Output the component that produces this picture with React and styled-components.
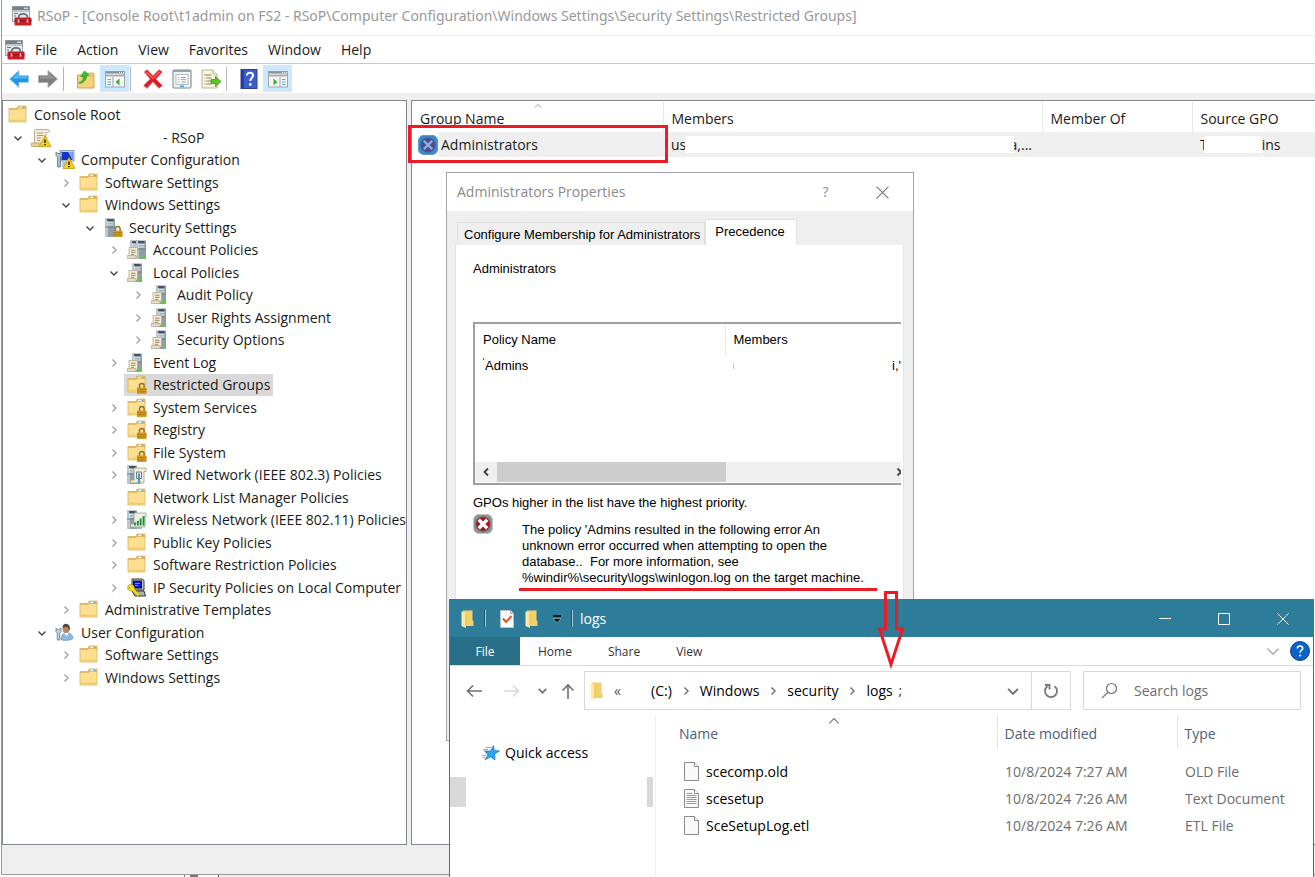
import React, { useState } from 'react';
import styled, { createGlobalStyle } from 'styled-components';

const GlobalStyle = createGlobalStyle`
  * {
    box-sizing: border-box;
  }

  body {
    margin: 0;
    background: #fff;
    color: #1a1a1a;
    font-family: 'Open Sans', 'Noto Sans', sans-serif;
    font-size: 14px;
    line-height: 20px;
  }

  button, input {
    font: inherit;
    color: inherit;
    border: 0;
    padding: 0;
    margin: 0;
    background: none;
  }

  svg {
    display: block;
    flex: none;
  }
`;

/* ---------- desktop and console window ---------- */

const Desktop = styled.div`
  position: relative;
  display: flex;
  flex-direction: column;
  min-height: 100vh;
  padding-left: 1px;
  background: #fff;
  overflow: hidden;
`;

const Console = styled.main`
  flex: 1;
  display: flex;
  flex-direction: column;
  border-left: 1px solid #9a9a9a;
  border-bottom: 1px solid #9a9a9a;
  background: #efefef;
`;

const TitleBar = styled.header`
  display: flex;
  align-items: center;
  gap: 5px;
  height: 36px;
  padding: 0 10px 4px;
  background: #fff;
  border-bottom: 1px solid #ececec;
`;

const WindowTitle = styled.h1`
  margin: 0;
  font-family: 'Noto Sans', 'Open Sans', sans-serif;
  font-size: 14px;
  font-weight: 400;
  color: #999;
  white-space: nowrap;
`;

const MenuBar = styled.nav`
  display: flex;
  align-items: center;
  height: 28px;
  padding-left: 3px;
  background: #fff;
  border-bottom: 1px solid #c8c8c8;
`;

const MenuItem = styled.button`
  padding: 0 10px;
`;

const ToolBar = styled.div`
  display: flex;
  align-items: center;
  height: 29px;
  padding-left: 2px;
  background: #fff;
`;

const ToolButton = styled.button`
  display: flex;
  align-items: center;
  justify-content: center;
  width: 29px;
  height: 27px;
  background: ${({ $on }) => ($on ? '#cce8ff' : 'none')};
`;

const ToolDivider = styled.span`
  width: 1px;
  height: 24px;
  margin: 0 7px 0 1px;
  background: #b5b5b5;
`;

const Panes = styled.div`
  flex: 1;
  display: flex;
  gap: 4px;
  padding-top: 7px;
`;

const Pane = styled.section`
  border: 1px solid #828790;
  background: #fff;
  ${({ $grow }) => ($grow ? 'flex: 1; border-right: 0; min-width: 0;' : 'width: 405px; padding: 3px 0 0 1px;')}
`;

const StatusBar = styled.footer`
  height: 29px;
`;

const Taskbar = styled.div`
  display: flex;
  height: 2px;
  padding-left: 183px;
`;

const TaskMark = styled.span`
  width: ${({ $wide }) => ($wide ? '8px' : '1px')};
  margin-right: ${({ $wide }) => ($wide ? '20px' : '5px')};
  background: #777;
`;

const TaskRest = styled.span`
  flex: 1;
  border-left: 1px solid #555;
  background: #efefef;
`;

/* ---------- tree ---------- */

const Tree = styled.ul`
  display: grid;
  grid-auto-rows: 1fr;
  height: 585px;
  margin: 0;
  padding: 0;
  list-style: none;
`;

const TreeRow = styled.li`
  display: flex;
  align-items: center;
  min-height: 0;
  padding-left: ${({ $depth }) => ($depth ? ($depth - 1) * 24 + 3 : 1)}px;
`;

const Toggle = styled.button`
  display: flex;
  align-items: center;
  justify-content: center;
  width: 21px;
  height: 20px;
`;

const NoToggle = styled.span`
  width: ${({ $root }) => ($root ? '0' : '21px')};
`;

const NodeButton = styled.button`
  display: flex;
  align-items: center;
  gap: 6px;
  height: 22px;
  padding: 0 3px;
  white-space: pre;
  background: ${({ $selected }) => ($selected ? '#d9d9d9' : 'none')};
`;

const HiddenName = styled.span`
  display: inline-block;
  width: 106px;
`;

/* ---------- group list ---------- */

const GroupTable = styled.table`
  width: 100%;
  table-layout: fixed;
  border-collapse: collapse;
  white-space: nowrap;
`;

const GroupHead = styled.th`
  position: relative;
  width: ${({ $width }) => $width || 'auto'};
  height: 31px;
  padding: 4px 0 0 8px;
  border-right: 1px solid #e8e8e8;
  font-weight: 400;
  text-align: left;

  &:last-child {
    border-right: 0;
  }

  svg {
    position: absolute;
    top: 1px;
    left: 122px;
  }
`;

const GroupCell = styled.td`
  height: 25px;
  padding: 0 10px 0 8px;
  background: #efefef;

  &:first-child {
    padding-left: 6px;
    background: linear-gradient(to right, #fff 26px, #efefef 26px);
  }
`;

const CellLine = styled.div`
  display: flex;
  align-items: center;
  gap: ${({ $gap }) => ($gap ? '3px' : '0')};
`;

const Blank = styled.span`
  position: relative;
  flex: ${({ $width }) => ($width ? 'none' : '1')};
  width: ${({ $width }) => $width || 'auto'};
  height: 17px;
  margin: 0 ${({ $right }) => $right || 0} 0 ${({ $left }) => $left || 0};
  background: #fff;
`;

/* ---------- properties dialog ---------- */

const Dialog = styled.section`
  position: absolute;
  top: 172px;
  left: 446px;
  width: 468px;
  height: 569px;
  display: flex;
  flex-direction: column;
  border: 1px solid #a3a3a3;
  background: #efefef;
  color: #000;
  font: 13px/16px 'Liberation Sans', Arial, sans-serif;
`;

const DialogTitle = styled.header`
  display: flex;
  align-items: center;
  height: 38px;
  padding: 0 2px 0 10px;
  background: #fff;
  color: #8a8a8a;
  font: 14px/20px 'Open Sans', 'Noto Sans', sans-serif;
`;

const DialogName = styled.h2`
  flex: 1;
  margin: 0;
  font-size: 14px;
  font-weight: 400;
`;

const DialogButton = styled.button`
  display: flex;
  align-items: center;
  justify-content: center;
  width: 57px;
  height: 36px;
`;

const Tabs = styled.div`
  display: flex;
  align-items: flex-end;
  height: 34px;
  padding: 8px 0 0 10px;
`;

const Tab = styled.button`
  height: ${({ $active }) => ($active ? '26px' : '23px')};
  padding: ${({ $active }) => ($active ? '0 11px 2px 9px' : '2px 4px 0 6px')};
  border: 1px solid #e0e0e0;
  border-bottom: 0;
  background: ${({ $active }) => ($active ? '#fff' : '#efefef')};
  white-space: nowrap;
`;

const TabPage = styled.div`
  flex: 1;
  margin: 0 9px 8px 8px;
  padding: 16px 2px 0 17px;
  background: #fff;
  border: 1px solid #e4e4e4;
  border-top: 0;
`;

const Text = styled.p`
  margin: 0;
`;

const PolicyBox = styled.div`
  display: flex;
  flex-direction: column;
  height: 163px;
  margin: 45px 0 10px;
  padding-bottom: 1px;
  border: 2px solid #9b9fa8;
  border-right: 0;
  overflow: hidden;
`;

const PolicyTable = styled.table`
  width: 100%;
  table-layout: fixed;
  border-collapse: collapse;

  th, td {
    height: 31px;
    padding: 0 8px;
    font-weight: 400;
    text-align: left;
    white-space: nowrap;
  }

  td {
    height: 22px;
    padding-right: 0;
  }

  th:first-child {
    width: 250px;
    border-right: 1px solid #e8e8e8;
  }
`;

const Remnant = styled.span`
  width: 1px;
  height: ${({ $tall }) => ($tall ? '6px' : '2px')};
  margin-right: 1px;
  align-self: ${({ $tall }) => ($tall ? 'center' : 'flex-start')};
  background: ${({ $tall }) => ($tall ? '#d9c3a0' : '#555')};
`;

const ScrollTrack = styled.div`
  display: grid;
  grid-template-columns: 22px 229px 1fr;
  align-items: center;
  justify-items: center;
  height: 20px;
  margin-top: auto;
  background: #efefef;
`;

const ScrollThumb = styled.div`
  width: 100%;
  height: 20px;
  background: #cdcdcd;
`;

const ScrollArrow = styled.button`
  display: flex;
  justify-self: ${({ $end }) => ($end ? 'end' : 'center')};
  width: ${({ $end }) => ($end ? '7px' : '10px')};
  overflow: hidden;
`;

const ErrorRow = styled.div`
  display: flex;
  gap: 29px;
  margin-top: 3px;
`;

const ErrorText = styled.p`
  margin: 0;
  padding-top: 8px;
  white-space: pre;
`;

const Underlined = styled.span`
  position: relative;

  &::after {
    content: '';
    position: absolute;
    right: -13px;
    bottom: -6px;
    left: -3px;
    height: 3px;
    background: #ed1c24;
  }
`;

/* ---------- explorer window ---------- */

const Explorer = styled.section`
  position: absolute;
  top: 599px;
  right: 1px;
  bottom: 0;
  left: 449px;
  display: flex;
  flex-direction: column;
  border: 1px solid #2d7d9a;
  border-bottom: 0;
  background: #fff;
  color: #000;
`;

const ExplorerTitle = styled.header`
  display: flex;
  align-items: center;
  height: 37px;
  padding: 0 1px 0 11px;
  background: #2d7d9a;
  color: #fff;
`;

const QuickBar = styled.div`
  display: flex;
  align-items: center;
  flex: 1;
`;

const QuickButton = styled.button`
  display: flex;
  align-items: center;
  justify-content: center;
  width: 25px;
`;

const QuickDivider = styled.span`
  width: 2px;
  height: 17px;
  margin: ${({ $last }) => ($last ? '0 7px 0 2px' : '0 8px 0 10px')};
  border-left: 1px solid #1f566b;
  background: #a5c9d6;
`;

const FolderName = styled.h2`
  margin: 0;
  font-size: 14px;
  font-weight: 400;
`;

const CaptionButton = styled.button`
  display: flex;
  align-items: center;
  justify-content: center;
  width: 59px;
  height: 36px;
`;

const Ribbon = styled.nav`
  display: flex;
  align-items: center;
  height: 29px;
  padding-right: 3px;
  border-bottom: 1px solid #dadada;
  font-size: 12px;
  color: #333;
`;

const RibbonTab = styled.button`
  height: 28px;
  padding: 1px 18px 0;
`;

const FileTab = styled(RibbonTab)`
  width: 70px;
  padding: 1px 0 0;
  color: #fff;
  background: #296f87;
`;

const RibbonSpace = styled.span`
  flex: 1;
`;

const RibbonButton = styled.button`
  margin-left: 9px;
`;

const NavRow = styled.div`
  display: flex;
  align-items: center;
  height: 49px;
  padding: 0 12px 0 5px;
`;

const NavButton = styled.button`
  display: flex;
  justify-content: center;
  width: ${({ $width }) => $width}px;
`;

const Address = styled.div`
  flex: 1;
  display: flex;
  align-items: center;
  height: 39px;
  margin: 0 12px 0 1px;
  padding-left: 5px;
  border: 1px solid #d9d9d9;
`;

const Chevrons = styled.span`
  width: 48px;
  padding-left: 11px;
  color: #555;
`;

const Crumb = styled.a`
  color: #000;
  text-decoration: none;
`;

const CrumbArrow = styled.span`
  display: flex;
  justify-content: center;
  width: 28px;
`;

const CrumbTail = styled.span`
  flex: 1;
  padding-left: 6px;
  font-size: 12px;
`;

const RefreshButton = styled.button`
  display: flex;
  align-items: center;
  justify-content: center;
  width: 39px;
  height: 37px;
  margin-left: 12px;
  border-left: 1px solid #d9d9d9;
`;

const SearchBox = styled.label`
  display: flex;
  align-items: center;
  gap: 16px;
  width: 218px;
  height: 39px;
  padding-left: 17px;
  border: 1px solid #d9d9d9;
`;

const SearchInput = styled.input`
  flex: 1;
  min-width: 0;
  outline: 0;

  &::placeholder {
    color: #6d6d6d;
    opacity: 1;
  }
`;

const ExplorerBody = styled.div`
  flex: 1;
  display: flex;
`;

const Places = styled.aside`
  width: 206px;
  border-right: 1px solid #efefef;
`;

const QuickAccess = styled.a`
  display: flex;
  align-items: center;
  gap: 5px;
  margin-top: 28px;
  padding-left: 31px;
  color: #000;
  text-decoration: none;
`;

const PlaceRow = styled.div`
  height: 30px;
  margin: 14px 2px 0 0;
  padding: 0 6px 0 16px;
  background: #d9d9d9;
`;

const PlaceBlank = styled.div`
  height: 30px;
  background: #fff;
`;

const FileTable = styled.table`
  flex: 1;
  align-self: flex-start;
  table-layout: fixed;
  border-collapse: collapse;
  white-space: nowrap;
`;

const FileHead = styled.th`
  position: relative;
  width: ${({ $width }) => $width || 'auto'};
  height: 34px;
  padding: 3px 0 0 ${({ $first }) => ($first ? '23px' : '7px')};
  border-right: 1px solid #e2e2e2;
  color: #4c607a;
  font-weight: 400;
  text-align: left;

  &:last-child {
    border-right: 0;
  }

  svg {
    position: absolute;
    top: 0;
    left: 172px;
  }
`;

const FileCell = styled.td`
  height: 27px;
  padding: 0 0 0 8px;
  color: #6d6d6d;
`;

const FileName = styled.div`
  display: flex;
  align-items: center;
  gap: 7px;
  padding-left: 20px;
  color: #000;
`;

const FileBody = styled.tbody`
  &::before {
    content: '';
    display: table-row;
    height: 9px;
  }
`;

/* ---------- marks over the windows ---------- */

const RedFrame = styled.div`
  position: absolute;
  top: 125px;
  left: 408px;
  width: 260px;
  height: 38px;
  border: 3px solid #ed1c24;
`;

const RedArrow = styled.svg`
  position: absolute;
  top: 590px;
  left: 877px;
`;

/* ---------- icons ---------- */

const Svg = ({ size = 20, children }) => (
  <svg width={size} height={size} viewBox="0 0 20 20" aria-hidden="true">
    {children}
  </svg>
);

const Lock = () => (
  <g>
    <path d="M12.500 13v-2.200a2.300 2.300 0 0 1 4.600 0V13" fill="none" stroke="#8f7430" strokeWidth="1.500" />
    <rect x="10" y="12.500" width="9.500" height="6.500" fill="#d59b1c" />
    <path d="M10 14.500h9.500M10 16.700h9.500" stroke="#a87410" strokeWidth="0.800" />
  </g>
);

const Warning = () => (
  <g>
    <path d="M14 7.500L20 18.500H8z" fill="#f6cf1d" stroke="#c79a00" strokeWidth="0.800" />
    <path d="M14 11.500v3.500M14 16v1.300" stroke="#222" strokeWidth="1.500" />
  </g>
);

const FolderShape = () => (
  <g>
    <path d="M1 3.500h8l1-2.500h8v4h-17z" fill="#e8c26a" stroke="#d3ab55" strokeWidth="0.700" />
    <path d="M11.500 2.500h5" stroke="#fff" strokeWidth="1.400" />
    <path d="M14.500 2.500h2" stroke="#4a9ad6" strokeWidth="1.400" />
    <path d="M1 4.500h8l1.500-1h7.500v13.500h-17z" fill="#fcdf90" stroke="#d9b461" strokeWidth="0.800" />
    <path d="M1.500 15.500h16" stroke="#f2ca6c" strokeWidth="1.500" />
  </g>
);

const ServerShape = ({ x = 8 }) => (
  <g>
    <rect x={x} y="0.500" width="10" height="18.500" fill="#8d9daa" />
    <rect x={x} y="0.500" width="3" height="18.500" fill="#b9c7d1" />
    <path d={`M${x + 2} 2h6.500`} stroke="#26343f" strokeWidth="1.400" />
    <path d={`M${x + 2} 4.800h6.500M${x + 2} 7h6.500`} stroke="#e9f1f5" />
    <path d={`M${x} 9h10`} stroke="#6f7f8b" />
  </g>
);

const Scroll = ({ x = 1 }) => (
  <g>
    <path d={`M${x + 2} 7.500h8.500v9.500h-8.500z`} fill="#f5ebd0" stroke="#b3a88a" strokeWidth="0.800" />
    <path d={`M${x} 15.500h9v3h-9z`} fill="#e4dbc0" stroke="#b3a88a" strokeWidth="0.700" />
    <path d={`M${x + 4} 10.200h4.500M${x + 4} 12.300h4.500M${x + 4} 14.300h3`} stroke="#8f8a78" />
  </g>
);

const FolderIcon = () => <Svg><FolderShape /></Svg>;

const FolderLockIcon = () => <Svg><FolderShape /><Lock /></Svg>;

const ServerLockIcon = () => <Svg><ServerShape x={2} /><Lock /></Svg>;

const ServerIcon = () => (
  <Svg>
    <ServerShape x={5} />
    <Scroll x={0} />
    <rect x="11.500" y="15.500" width="3" height="2.500" fill="#4fdc1d" />
  </Svg>
);

const ServersIcon = () => (
  <Svg>
    <ServerShape x={3} />
    <ServerShape x={9} />
    <Scroll x={0} />
    <rect x="15" y="15.500" width="3" height="2.500" fill="#4fdc1d" />
  </Svg>
);

const RsopIcon = () => (
  <Svg>
    <path d="M5 1.500h12.500c1 0 1 3 0 3H15V16H3.500V3c0-1 .5-1.500 1.500-1.500z" fill="#f6edd3" stroke="#b8b19c" />
    <path d="M0.500 15h10v3.500h-10z" fill="#e6cf93" stroke="#b8a468" strokeWidth="0.800" />
    <path d="M6 5h6.500M6 7.500h6.500M6 10h4M6 12.500h3" stroke="#a39e8b" />
    <Warning />
  </Svg>
);

const ComputerIcon = () => (
  <Svg>
    <rect x="5" y="0.500" width="14" height="10.500" fill="#c5d3df" stroke="#8ca0b3" />
    <rect x="6.500" y="2" width="11" height="8" fill="#1632c4" />
    <path d="M13 2h4.500v8z" fill="#7fa8ef" />
    <path d="M1 2v3.500l1.500 1.500V17h3V7L7 5.500V2L5 3.500H3z" fill="#a8bfd2" stroke="#56738e" strokeWidth="0.800" />
    <path d="M7 12h5v5H7z" fill="#b9c6d1" />
    <Warning />
  </Svg>
);

const UserIcon = () => (
  <Svg>
    <path d="M6 16.500c0-5 3-7 6-7s6 3 6 6c-2 2-10 2.500-12 1z" fill="#8db9e6" stroke="#5e90c4" strokeWidth="0.700" />
    <path d="M9 9.500l2.500 4L14 9.500z" fill="#fff" />
    <ellipse cx="11" cy="5.500" rx="3.500" ry="4.500" fill="#b98660" />
    <path d="M7.500 4.500C7.500-.5 15-.5 15 5.500l-1 2.500-1-4z" fill="#5b4a41" />
    <path d="M1 5v3.500l1.300 1.500v7h2.400v-7L6 8.500V5L4.500 6.500h-2z" fill="#c5d4e0" stroke="#5a7893" strokeWidth="0.800" />
  </Svg>
);

const WiredIcon = () => (
  <Svg>
    <ServerShape x={0} />
    <path d="M7 3h12v3.500h-2V18H3.500v-3H7z" fill="#f4ecd4" stroke="#a59d83" strokeWidth="0.800" />
    <path d="M9.500 7h5v6.500h-5z" fill="#dfeaf3" stroke="#5e82a5" />
    <path d="M12 8.500v9.500" stroke="#5e82a5" strokeWidth="1.800" />
    <path d="M12 16v3" stroke="#39b3d6" strokeWidth="3" />
  </Svg>
);

const WirelessIcon = () => (
  <Svg>
    <ServerShape x={0} />
    <path d="M7 3h12v3.500h-1V17H3.500v-3H7z" fill="#eaf0e2" stroke="#a59d83" strokeWidth="0.800" />
    <path d="M6 14.500l12-9v9z" fill="#c6e7c8" />
    <path d="M8 15.500v-3M10.800 15.500v-4.500M13.600 15.500v-7M16.600 15.500v-9.500" stroke="#1e8a3e" strokeWidth="1.800" />
    <path d="M4 18h11" stroke="#a5a59c" strokeWidth="1.500" />
  </Svg>
);

const IpSecIcon = () => (
  <Svg>
    <path d="M5 1h10l2 1.500V12H5z" fill="#c9ccd0" stroke="#333" />
    <rect x="6.500" y="3" width="8" height="7" fill="#0818d8" stroke="#111" />
    <path d="M8 5.500h5M8 7.500h3" stroke="#4ea8ff" />
    <path d="M5 13h12l1.500 5H8z" fill="#aeb3b8" stroke="#333" />
    <path d="M0.500 8c2-2 5-2 6.500 0.500L7.500 11l5 5.500-1.500 2-5.500-5.500c-3 0-5-1-5-3h3z" fill="#f5e61a" stroke="#a59300" strokeWidth="0.700" />
  </Svg>
);

const ToolboxIcon = () => (
  <Svg>
    <rect x="0.500" y="0.500" width="17" height="15" fill="#e6eaed" stroke="#a1a9af" />
    <rect x="0.500" y="0.500" width="17" height="3.500" fill="#75818b" />
    <path d="M12 2.200h4" stroke="#fff" />
    <path d="M1 5h16" stroke="#aeb8c0" strokeWidth="1.500" />
    <path d="M2 7.500h4M2 10h2" stroke="#6d7780" strokeWidth="1.200" />
    <path d="M6.500 12C6.500 6.500 15.500 6.500 15.500 12" fill="none" stroke="#6b7176" strokeWidth="1.600" />
    <rect x="2.500" y="11.500" width="17" height="8" rx="1" fill="#c8202a" />
    <path d="M2.500 14.800h17" stroke="#8d0f17" />
    <path d="M6.500 13.500v3M15.500 13.500v3" stroke="#f3dcdc" strokeWidth="1.500" />
  </Svg>
);

const ArrowIcon = ({ back }) => (
  <Svg>
    <g transform={back ? undefined : 'translate(20 0) scale(-1 1)'}>
      <path
        d="M0.500 10L10 1.500V6.500h9.500v7H10v5z"
        fill={back ? '#2593e2' : '#7d7d7d'}
        stroke={back ? '#9bd4f7' : '#b0b0b0'}
      />
      <path d="M3 9.500l6-5v3h9v2z" fill={back ? '#5ab8f3' : '#989898'} />
    </g>
  </Svg>
);

const FolderUpIcon = () => (
  <Svg>
    <path d="M1.500 6h16.500v13h-16.500z" fill="#f5d37c" stroke="#cfa654" />
    <path d="M11 4h7v3h-7z" fill="#f1cc72" stroke="#cfa654" strokeWidth="0.700" />
    <path d="M3 13.500c4-1 4.500-3.500 4-6H4.500L8.500 2l4.500 4-2.500.500c.500 4-2.500 7-7 8z" fill="#35c02b" stroke="#1b8a1b" strokeWidth="0.600" />
  </Svg>
);

const PaneIcon = ({ right }) => (
  <Svg>
    <rect x="0.500" y="2.500" width="19" height="15.500" fill="#f6f6f6" stroke="#a0a6ab" />
    <path d="M1 3.500h18" stroke="#88919a" strokeWidth="2" />
    <path d="M1 6.500h18" stroke="#a9b0b6" strokeWidth="2" />
    <path d="M14 3.500h1M16 3.500h1M18 3.500h1" stroke="#fff" />
    <g transform={right ? 'translate(20 0) scale(-1 1)' : undefined}>
      <path d="M8 8v10" stroke="#a0a6ab" />
      <path d="M2.500 10.500h3.500M2.500 13h3.500M2.500 15.500h3.500" stroke="#6f9fca" strokeWidth="1.200" />
      <path d="M14.500 9.500v7L10.500 13z" fill="#3fae2a" />
    </g>
  </Svg>
);

const DeleteIcon = () => (
  <Svg>
    <path d="M1 3l3-2.500 6 6 6-6L19.500 3l-6.500 7 6.500 6.500-3.500 3-6-6.500-6 6.500L.5 16.500 7 10z" fill="#dc1f26" stroke="#f19a9c" strokeWidth="0.600" />
    <path d="M2.500 3.500L4 2.300l6 6 6-6 1.500 1-6.500 6-1 1-1.500-1z" fill="#f25a5e" />
  </Svg>
);

const PropertiesIcon = () => (
  <Svg>
    <rect x="1" y="1" width="18" height="18" rx="1.500" fill="#eef1f3" stroke="#a8adb2" strokeWidth="1.600" />
    <path d="M1 2h18" stroke="#99a0a6" strokeWidth="2" />
    <rect x="4" y="5.500" width="12" height="10" fill="#fff" stroke="#b3b9be" />
    <path d="M6 8.500h1.500M9 8.500h5M6 10.700h1.500M9 10.700h5M6 13h1.500M9 13h5" stroke="#98a2a9" />
    <path d="M8 17.300h4" stroke="#2fa7e0" strokeWidth="1.500" />
  </Svg>
);

const ExportIcon = () => (
  <Svg>
    <path d="M1 1h11l4 4v14H1z" fill="#f9f4de" stroke="#b9b296" />
    <path d="M12 1v4h4" fill="#fff" stroke="#b9b296" />
    <path d="M3.500 6h7M5.500 9h5M5.500 12h5M5.500 15h5" stroke="#85816f" />
    <path d="M3.500 9h1M3.500 12h1M3.500 15h1" stroke="#85816f" />
    <path d="M10 10.500h4.500V7.500l5.500 5-5.500 5v-3H10z" fill="#57c91f" stroke="#2f9410" strokeWidth="0.700" />
  </Svg>
);

const HelpBookIcon = () => (
  <Svg>
    <rect x="2" y="0.500" width="16" height="19" fill="#3a5ccc" stroke="#2a4297" />
    <path d="M3.500 1v18" stroke="#1f3590" strokeWidth="2" />
    <path d="M8 6.500c0-4 6.500-3.500 6 .200-.200 2.300-2.700 2.300-2.700 5.300" fill="none" stroke="#fff" strokeWidth="2" />
    <circle cx="11.300" cy="15.500" r="1.400" fill="#fff" />
  </Svg>
);

const ErrorIcon = ({ blue }) => (
  <Svg>
    <path
      d="M6 .5h8c3 0 5.500 2.500 5.500 5.500v8c0 3-2.500 5.500-5.500 5.500H6C3 19.500.5 17 .5 14V6C.5 3 3 .5 6 .5z"
      fill={blue ? '#3f83c4' : '#8d8d8d'}
      stroke={blue ? '#5a9ad2' : '#c4c4c4'}
      strokeWidth="1.200"
    />
    <circle cx="10" cy="10" r="7" fill={blue ? '#5c4580' : '#b11116'} stroke={blue ? '#2f5f9b' : '#555'} />
    <path d="M5.800 5.800l8.400 8.400M14.200 5.800l-8.400 8.400" stroke={blue ? '#7fb2e6' : '#fff'} strokeWidth={blue ? 2.400 : 3.400} />
  </Svg>
);

const Chevron = ({ dir = 'right', size = 10, color = '#a0a0a0', width = 1.3 }) => {
  const paths = {
    right: 'M3.500 1.500L7 5 3.500 8.500',
    left: 'M7 1.500L3.500 5 7 8.500',
    down: 'M1.500 3.500L5 7l3.500-3.500',
    up: 'M1 7l4-4 4 4',
  };
  return (
    <svg width={size} height={size} viewBox="0 0 10 10" aria-hidden="true">
      <path d={paths[dir]} fill="none" stroke={color} strokeWidth={width} />
    </svg>
  );
};

const SmallFolder = () => (
  <svg width="13" height="18" viewBox="0 0 13 18" aria-hidden="true">
    <path d="M2 0.500h9.500V10l1 1V16H2z" fill="#f3d06c" />
    <path d="M0.500 1l4.500 2.500V18l-4.500-2z" fill="#fde9a2" />
    <path d="M5 3.500v12.500" stroke="#e3b94a" />
  </svg>
);

const CheckPage = () => (
  <svg width="14" height="18" viewBox="0 0 14 18" aria-hidden="true">
    <path d="M0.500 0.500h10l3 3v14h-13z" fill="#fff" stroke="#b9c3c9" />
    <path d="M10.500 0.500v3h3" fill="#dfe5e8" stroke="#9aa7ae" />
    <path d="M3 8.500l3 3.500 5.500-6" fill="none" stroke="#e2571d" strokeWidth="2" />
  </svg>
);

const PageIcon = ({ lines }) => (
  <svg width="15" height="19" viewBox="0 0 15 19" aria-hidden="true">
    <path d="M0.500 0.500h10l4 4v14h-14z" fill="#f8f9f9" stroke="#8b8b8b" />
    <path d="M10.500 0.500v4h4" fill="#fff" stroke="#8b8b8b" />
    {lines && <path d="M2.500 4.500h6M2.500 6.500h10M2.500 8.500h10M2.500 10.500h10M2.500 12.500h10M2.500 14.500h10" stroke="#999" />}
  </svg>
);

const StarIcon = () => (
  <svg width="19" height="16" viewBox="0 0 19 16" aria-hidden="true">
    <path d="M12.500.5l.700 4.800 5.300.700-4.800 3 .300 6-4.500-3.200L4 15l3-5-3.500-4 6 0z" fill="#2aa5f2" stroke="#1276c2" strokeWidth="0.700" />
    <path d="M4.500 2.500H10M2 4.500h5M0.500 10.500h5M1.500 12.500h3" stroke="#5dbcf5" />
  </svg>
);

const LineArrow = ({ dir, color }) => {
  const paths = {
    left: 'M16 8H1.500M7 2.500L1.500 8 7 13.500',
    right: 'M0 8h14.500M9 2.500L14.500 8 9 13.500',
    up: 'M8 16V2M2.500 7.500L8 2l5.500 5.500',
  };
  return (
    <svg width="16" height="16" viewBox="0 0 16 16" aria-hidden="true">
      <path d={paths[dir]} fill="none" stroke={color} strokeWidth="1.600" />
    </svg>
  );
};

const CloseIcon = ({ size, color }) => (
  <svg width={size} height={size} viewBox="0 0 12 12" aria-hidden="true">
    <path d="M0.500 0.500l11 11M11.500 0.500l-11 11" stroke={color} strokeWidth="1" />
  </svg>
);

const RefreshIcon = () => (
  <svg width="16" height="16" viewBox="0 0 16 16" aria-hidden="true">
    <path d="M4.500 3.200a6 6 0 1 0 7 0" fill="none" stroke="#777" strokeWidth="1.800" />
    <path d="M2 2h4.500v4.500" fill="none" stroke="#777" strokeWidth="1.800" />
  </svg>
);

const SearchIcon = () => (
  <svg width="17" height="17" viewBox="0 0 17 17" aria-hidden="true">
    <circle cx="10.500" cy="6.500" r="5" fill="none" stroke="#777" strokeWidth="1.200" />
    <path d="M7 10.200L1 16" stroke="#777" strokeWidth="1.200" />
  </svg>
);

/* ---------- data ---------- */

const treeRows = [
  { depth: 0, label: 'Console Root', icon: FolderIcon },
  { depth: 1, label: '- RSoP', icon: RsopIcon, open: true, hiddenName: true },
  { depth: 2, label: 'Computer Configuration', icon: ComputerIcon, open: true },
  { depth: 3, label: 'Software Settings', icon: FolderIcon, open: false },
  { depth: 3, label: 'Windows Settings', icon: FolderIcon, open: true },
  { depth: 4, label: 'Security Settings', icon: ServerLockIcon, open: true },
  { depth: 5, label: 'Account Policies', icon: ServersIcon, open: false },
  { depth: 5, label: 'Local Policies', icon: ServerIcon, open: true },
  { depth: 6, label: 'Audit Policy', icon: ServerIcon, open: false },
  { depth: 6, label: 'User Rights Assignment', icon: ServerIcon, open: false },
  { depth: 6, label: 'Security Options', icon: ServerIcon, open: false },
  { depth: 5, label: 'Event Log', icon: ServerIcon, open: false },
  { depth: 5, label: 'Restricted Groups', icon: FolderLockIcon },
  { depth: 5, label: 'System Services', icon: FolderLockIcon, open: false },
  { depth: 5, label: 'Registry', icon: FolderLockIcon, open: false },
  { depth: 5, label: 'File System', icon: FolderLockIcon, open: false },
  { depth: 5, label: 'Wired Network (IEEE 802.3) Policies', icon: WiredIcon, open: false },
  { depth: 5, label: 'Network List Manager Policies', icon: FolderIcon },
  { depth: 5, label: 'Wireless Network (IEEE 802.11) Policies', icon: WirelessIcon, open: false },
  { depth: 5, label: 'Public Key Policies', icon: FolderIcon, open: false },
  { depth: 5, label: 'Software Restriction Policies', icon: FolderIcon, open: false },
  { depth: 5, label: 'IP Security Policies on Local Computer', icon: IpSecIcon, open: false },
  { depth: 3, label: 'Administrative Templates', icon: FolderIcon, open: false },
  { depth: 2, label: 'User Configuration', icon: UserIcon, open: true },
  { depth: 3, label: 'Software Settings', icon: FolderIcon, open: false },
  { depth: 3, label: 'Windows Settings', icon: FolderIcon, open: false },
];

const files = [
  { name: 'scecomp.old', date: '10/8/2024 7:27 AM', type: 'OLD File' },
  { name: 'scesetup', date: '10/8/2024 7:26 AM', type: 'Text Document', lines: true },
  { name: 'SceSetupLog.etl', date: '10/8/2024 7:26 AM', type: 'ETL File' },
];

const menus = ['File', 'Action', 'View', 'Favorites', 'Window', 'Help'];

/* ---------- parts ---------- */

const ConsoleTree = () => {
  const [selected, setSelected] = useState(12);

  return (
    <Tree>
      {treeRows.map((row, index) => {
        const Icon = row.icon;
        return (
          <TreeRow key={index} $depth={row.depth}>
            {row.open === undefined ? (
              <NoToggle $root={row.depth === 0} />
            ) : (
              <Toggle aria-label={row.label} aria-expanded={row.open}>
                <Chevron dir={row.open ? 'down' : 'right'} color={row.open ? '#404040' : '#a0a0a0'} />
              </Toggle>
            )}
            <NodeButton $selected={selected === index} onClick={() => setSelected(index)}>
              <Icon />
              <span>
                {row.hiddenName && <HiddenName />}
                {row.label}
              </span>
            </NodeButton>
          </TreeRow>
        );
      })}
    </Tree>
  );
};

const GroupList = () => (
  <GroupTable>
    <thead>
      <tr>
        <GroupHead $width="251px">
          Group Name
          <Chevron dir="up" size={8} color="#888" width={1} />
        </GroupHead>
        <GroupHead $width="379px">Members</GroupHead>
        <GroupHead $width="150px">Member Of</GroupHead>
        <GroupHead>Source GPO</GroupHead>
      </tr>
    </thead>
    <tbody>
      <tr>
        <GroupCell>
          <CellLine $gap>
            <ErrorIcon blue />
            Administrators
          </CellLine>
        </GroupCell>
        <GroupCell>
          <CellLine>us<Blank $left="-1px" $right="-4px" />a,...</CellLine>
        </GroupCell>
        <GroupCell />
        <GroupCell>
          <CellLine>T<Blank $width="58px" $left="-4px" />ins</CellLine>
        </GroupCell>
      </tr>
    </tbody>
  </GroupTable>
);

const PropertiesDialog = () => (
  <Dialog>
    <DialogTitle>
      <DialogName>Administrators Properties</DialogName>
      <DialogButton>?</DialogButton>
      <DialogButton aria-label="Close"><CloseIcon size={13} color="#777" /></DialogButton>
    </DialogTitle>
    <Tabs>
      <Tab>Configure Membership for Administrators</Tab>
      <Tab $active>Precedence</Tab>
    </Tabs>
    <TabPage>
      <Text>Administrators</Text>
      <PolicyBox>
        <PolicyTable>
          <thead>
            <tr>
              <th>Policy Name</th>
              <th>Members</th>
            </tr>
          </thead>
          <tbody>
            <tr>
              <td><CellLine><Remnant />Admins</CellLine></td>
              <td><CellLine><Remnant $tall /><Blank />i,'</CellLine></td>
            </tr>
          </tbody>
        </PolicyTable>
        <ScrollTrack>
          <ScrollArrow aria-label="Scroll left"><Chevron dir="left" color="#404040" width={1.8} /></ScrollArrow>
          <ScrollThumb />
          <ScrollArrow $end aria-label="Scroll right"><Chevron color="#404040" width={1.8} /></ScrollArrow>
        </ScrollTrack>
      </PolicyBox>
      <Text>GPOs higher in the list have the highest priority.</Text>
      <ErrorRow>
        <ErrorIcon />
        <ErrorText>
          {"The policy 'Admins resulted in the following error An\nunknown error occurred when attempting to open the\ndatabase..  For more information, see\n"}
          <Underlined>%windir%\security\logs\winlogon.log on the target machine.</Underlined>
        </ErrorText>
      </ErrorRow>
    </TabPage>
  </Dialog>
);

const ExplorerWindow = () => (
  <Explorer>
    <ExplorerTitle>
      <QuickBar>
        <SmallFolder />
        <QuickDivider />
        <QuickButton aria-label="Properties"><CheckPage /></QuickButton>
        <QuickButton aria-label="New folder"><SmallFolder /></QuickButton>
        <QuickButton aria-label="Customize">
          <svg width="8" height="8" viewBox="0 0 8 8" aria-hidden="true">
            <path d="M0 1h8" stroke="#000" strokeWidth="1.500" />
            <path d="M0 3.500h8L4 7.500z" fill="#000" stroke="#cfe1e8" strokeWidth="0.500" />
          </svg>
        </QuickButton>
        <QuickDivider $last />
        <FolderName>logs</FolderName>
      </QuickBar>
      <CaptionButton aria-label="Minimize">
        <svg width="12" height="12" viewBox="0 0 12 12"><path d="M0 5.500h12" stroke="#fff" /></svg>
      </CaptionButton>
      <CaptionButton aria-label="Maximize">
        <svg width="12" height="12" viewBox="0 0 12 12"><path d="M0.500 0.500h11v11h-11z" fill="none" stroke="#fff" /></svg>
      </CaptionButton>
      <CaptionButton aria-label="Close"><CloseIcon size={12} color="#fff" /></CaptionButton>
    </ExplorerTitle>
    <Ribbon>
      <FileTab>File</FileTab>
      <RibbonTab>Home</RibbonTab>
      <RibbonTab>Share</RibbonTab>
      <RibbonTab>View</RibbonTab>
      <RibbonSpace />
      <RibbonButton aria-label="Expand the ribbon"><Chevron dir="down" size={16} color="#a0a0a0" width={0.8} /></RibbonButton>
      <RibbonButton aria-label="Help">
        <Svg>
          <circle cx="10" cy="10" r="9.500" fill="#0a63c9" stroke="#0b478f" />
          <path d="M7.300 7.500c0-3.500 5.600-3.300 5.400-.200-.200 2-2.600 2-2.600 4.500" fill="none" stroke="#fff" strokeWidth="1.600" />
          <circle cx="10.100" cy="14.500" r="1.100" fill="#fff" />
        </Svg>
      </RibbonButton>
    </Ribbon>
    <NavRow>
      <NavButton $width={38} aria-label="Back"><LineArrow dir="left" color="#6f6f6f" /></NavButton>
      <NavButton $width={38} aria-label="Forward"><LineArrow dir="right" color="#d8d8d8" /></NavButton>
      <NavButton $width={22} aria-label="Recent locations"><Chevron dir="down" size={11} color="#777" width={1.6} /></NavButton>
      <NavButton $width={30} aria-label="Up"><LineArrow dir="up" color="#6f6f6f" /></NavButton>
      <Address>
        <SmallFolder />
        <Chevrons>«</Chevrons>
        <Crumb href="#c">(C:)</Crumb>
        <CrumbArrow><Chevron color="#777" width={1.5} /></CrumbArrow>
        <Crumb href="#windows">Windows</Crumb>
        <CrumbArrow><Chevron color="#777" width={1.5} /></CrumbArrow>
        <Crumb href="#security">security</Crumb>
        <CrumbArrow><Chevron color="#777" width={1.5} /></CrumbArrow>
        <Crumb href="#logs">logs</Crumb>
        <CrumbTail>;</CrumbTail>
        <NavButton $width={12} aria-label="Previous locations"><Chevron dir="down" size={14} color="#777" width={1.4} /></NavButton>
        <RefreshButton aria-label="Refresh"><RefreshIcon /></RefreshButton>
      </Address>
      <SearchBox>
        <SearchIcon />
        <SearchInput type="text" placeholder="Search logs" aria-label="Search logs" />
      </SearchBox>
    </NavRow>
    <ExplorerBody>
      <Places>
        <QuickAccess href="#quick-access">
          <StarIcon />
          Quick access
        </QuickAccess>
        <PlaceRow>
          <PlaceBlank />
        </PlaceRow>
      </Places>
      <FileTable>
        <thead>
          <tr>
            <FileHead $first $width="341px">
              Name
              <Chevron dir="up" size={12} color="#777" width={0.9} />
            </FileHead>
            <FileHead $width="180px">Date modified</FileHead>
            <FileHead>Type</FileHead>
          </tr>
        </thead>
        <FileBody>
          {files.map((file) => (
            <tr key={file.name}>
              <FileCell>
                <FileName>
                  <PageIcon lines={file.lines} />
                  {file.name}
                </FileName>
              </FileCell>
              <FileCell>{file.date}</FileCell>
              <FileCell>{file.type}</FileCell>
            </tr>
          ))}
        </FileBody>
      </FileTable>
    </ExplorerBody>
  </Explorer>
);

const App = () => (
  <>
    <GlobalStyle />
    <Desktop>
      <Console>
        <TitleBar>
          <ToolboxIcon />
          <WindowTitle>
            RSoP - [Console Root\t1admin on FS2 - RSoP\Computer Configuration\Windows Settings\Security Settings\Restricted Groups]
          </WindowTitle>
        </TitleBar>
        <MenuBar>
          <ToolboxIcon />
          {menus.map((name) => (
            <MenuItem key={name}>{name}</MenuItem>
          ))}
        </MenuBar>
        <ToolBar>
          <ToolButton aria-label="Back"><ArrowIcon back /></ToolButton>
          <ToolButton aria-label="Forward"><ArrowIcon /></ToolButton>
          <ToolDivider />
          <ToolButton aria-label="Up one level"><FolderUpIcon /></ToolButton>
          <ToolButton $on aria-label="Console tree"><PaneIcon /></ToolButton>
          <ToolDivider />
          <ToolButton aria-label="Delete"><DeleteIcon /></ToolButton>
          <ToolButton aria-label="Properties"><PropertiesIcon /></ToolButton>
          <ToolButton aria-label="Export list"><ExportIcon /></ToolButton>
          <ToolDivider />
          <ToolButton aria-label="Help"><HelpBookIcon /></ToolButton>
          <ToolButton $on aria-label="Action pane"><PaneIcon right /></ToolButton>
        </ToolBar>
        <Panes>
          <Pane>
            <ConsoleTree />
          </Pane>
          <Pane $grow>
            <GroupList />
          </Pane>
        </Panes>
        <StatusBar />
      </Console>
      <Taskbar>
        <TaskMark />
        <TaskMark $wide />
        <TaskRest />
      </Taskbar>
      <PropertiesDialog />
      <ExplorerWindow />
      <RedFrame />
      <RedArrow width="28" height="80" viewBox="0 0 28 80" aria-hidden="true">
        <path d="M8.500 2.500h11v36.500h6L14 74.500 2.500 39h6z" fill="none" stroke="#ed1c24" strokeWidth="3" />
      </RedArrow>
    </Desktop>
  </>
);

export default App;
